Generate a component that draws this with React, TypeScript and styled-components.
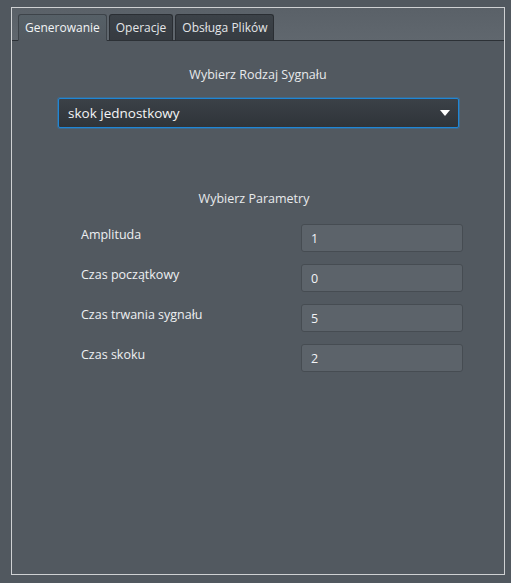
import React from "react";
import styled, { createGlobalStyle } from "styled-components";

const Global = createGlobalStyle`
  html, body { margin: 0; padding: 0; background: #51585f; }
  body { font-family: "Open Sans", "Noto Sans", sans-serif; color: #e6e8ea; }
  * { box-sizing: border-box; }
`;

const Page = styled.div`
  width: 511px;
  height: 583px;
  padding: 7px 6px 8px 11px;
`;

const Frame = styled.div`
  width: 100%;
  height: 100%;
  border: 1px solid #cfd1d3;
  display: flex;
  flex-direction: column;
`;

const TabBar = styled.div`
  height: 33px;
  background: linear-gradient(#5a6168, #60676e);
  border-bottom: 1px solid #2c3136;
  display: flex;
  align-items: flex-end;
  padding-left: 6px;
  gap: 2px;
`;

const Tab = styled.div<{ $active?: boolean }>`
  height: 27px;
  margin-bottom: -1px;
  padding: 0 6px;
  display: flex;
  align-items: center;
  font-size: 12px;
  color: ${(p) => (p.$active ? "#f2f4f6" : "#e4e6e8")};
  background: ${(p) =>
    p.$active ? "linear-gradient(#566067, #525960)" : "linear-gradient(#3c4248, #363b41)"};
  border: 1px solid ${(p) => (p.$active ? "#3d4349" : "#2a2e33")};
  border-bottom: ${(p) => (p.$active ? "1px solid #525960" : "1px solid #2c3136")};
  border-radius: 3px 3px 0 0;
`;

const Pane = styled.div`
  flex: 1;
  background: #525960;
  display: flex;
  flex-direction: column;
  align-items: center;
`;

const Heading = styled.div<{ $top: number; $shift?: number }>`
  margin-top: ${(p) => p.$top}px;
  margin-left: ${(p) => p.$shift ?? 0}px;
  font-size: 12.5px;
  line-height: 18px;
  color: #e8eaec;
`;

const Combo = styled.div`
  margin-top: 14px;
  width: 401px;
  height: 30px;
  margin-left: 1px;
  border: 1px solid #1f86d6;
  box-shadow: 0 0 0 1px rgba(31, 134, 214, 0.35);
  border-radius: 2px;
  background: linear-gradient(#3b4147, #2f3439);
  display: flex;
  align-items: center;
  justify-content: space-between;
  padding: 0 8px 0 9px;
  font-size: 13.5px;
  color: #f4f5f6;
`;

const Arrow = styled.svg`
  width: 10px;
  height: 6px;
`;

const Params = styled.div`
  margin-top: 16px;
  align-self: stretch;
  padding: 0 41px 0 69px;
  display: flex;
  flex-direction: column;
  gap: 12px;
`;

const Row = styled.div`
  display: flex;
  justify-content: space-between;
  align-items: center;
  height: 28px;
`;

const Label = styled.div`
  font-size: 12.5px;
  color: #eef0f2;
  margin-top: -8px;
`;

const Field = styled.div`
  width: 162px;
  height: 28px;
  background: #5c636a;
  border: 1px solid #464c52;
  border-radius: 3px;
  display: flex;
  align-items: center;
  padding-left: 9px;
  font-size: 12.5px;
  color: #f2f4f6;
`;

const params = [
  ["Amplituda", "1"],
  ["Czas początkowy", "0"],
  ["Czas trwania sygnału", "5"],
  ["Czas skoku", "2"],
];

export default function App() {
  return (
    <Page>
      <Global />
      <Frame>
        <TabBar>
          <Tab $active>Generowanie</Tab>
          <Tab>Operacje</Tab>
          <Tab>Obsługa Plików</Tab>
        </TabBar>
        <Pane>
          <Heading $top={25}>Wybierz Rodzaj Sygnału</Heading>
          <Combo>
            <span>skok jednostkowy</span>
            <Arrow viewBox="0 0 10 6">
              <path d="M0 0 L10 0 L5 6 Z" fill="#ffffff" />
            </Arrow>
          </Combo>
          <Heading $top={62} $shift={-8}>Wybierz Parametry</Heading>
          <Params>
            {params.map(([l, v]) => (
              <Row key={l}>
                <Label>{l}</Label>
                <Field>{v}</Field>
              </Row>
            ))}
          </Params>
        </Pane>
      </Frame>
    </Page>
  );
}
